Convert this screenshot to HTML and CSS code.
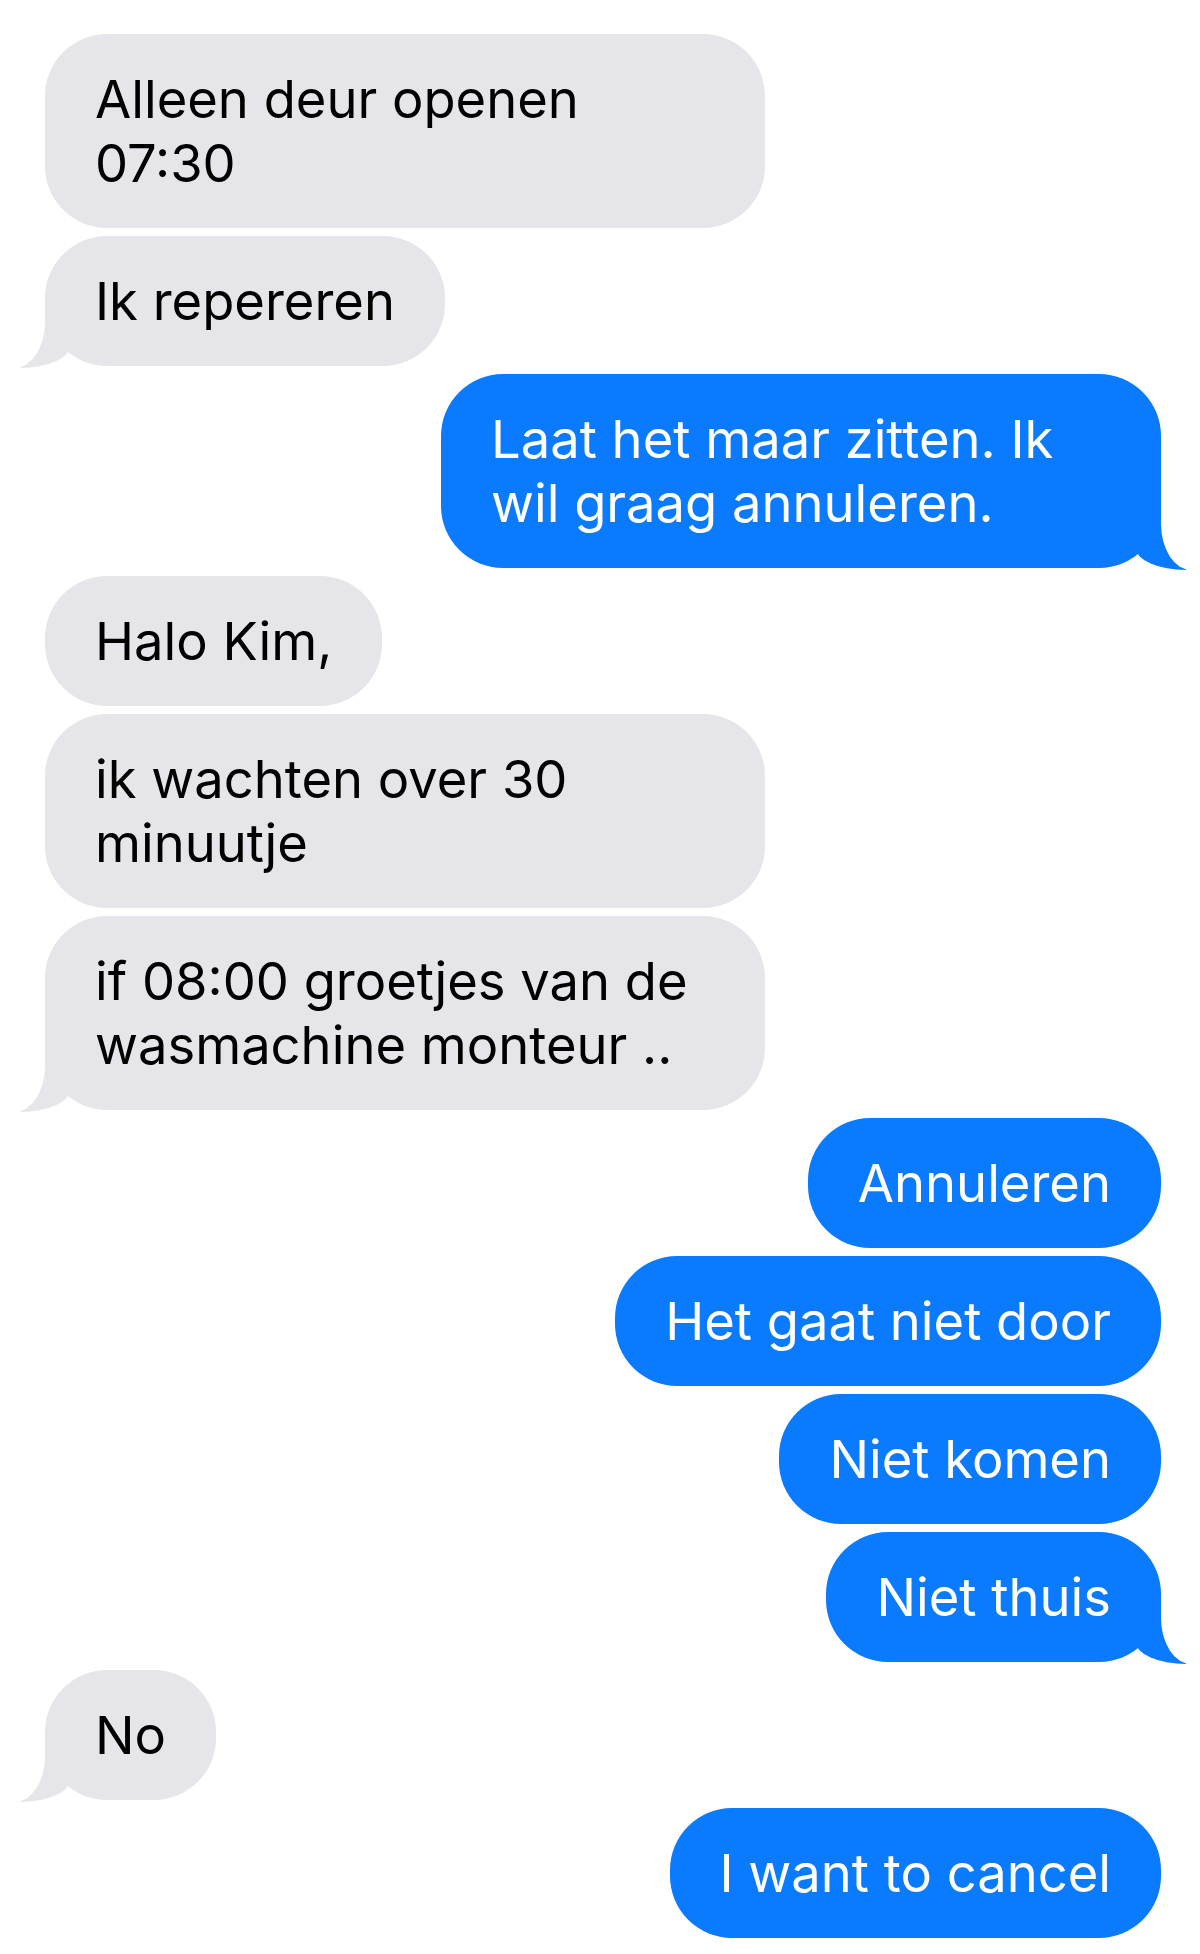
FILE: index.html
```html
<!DOCTYPE html>
<html lang="nl">
<head>
  <meta charset="UTF-8" />
  <meta name="viewport" content="width=device-width, initial-scale=1.0"/>
  <title>Berichten</title>
  <link rel="stylesheet" href="styles.css">
</head>
<body>
  <div class="chat">
    <div class="bubble them long">Alleen deur openen<br>07:30</div>
    <div class="bubble them tail">Ik repereren</div>

    <div class="bubble me long tail">Laat het maar zitten. Ik<br>wil graag annuleren.</div>

    <div class="bubble them">Halo Kim,</div>
    <div class="bubble them long">ik wachten over 30<br>minuutje</div>
    <div class="bubble them long tail">if 08:00 groetjes van de<br>wasmachine monteur ..</div>

    <div class="bubble me">Annuleren</div>
    <div class="bubble me">Het gaat niet door</div>
    <div class="bubble me">Niet komen</div>
    <div class="bubble me tail">Niet thuis</div>

    <div class="bubble them tail">No</div>

    <div class="bubble me">I want to cancel</div>
  </div>
</body>
</html>
```

FILE: styles.css
```css
* {
  box-sizing: border-box;
}
body {
  margin: 0;
  background: #fff;
  font-family: 'Inter', 'Liberation Sans', sans-serif;
}

.chat {
  display: flex;
  flex-direction: column;
  gap: 8px;
  padding: 34px 39px 20px 45px;
}

.bubble {
  position: relative;
  font-size: 52.5px;
  line-height: 64px;
  padding: 33px 50px;
  border-radius: 62px;
  white-space: nowrap;
}

.bubble.long {
  width: 720px;
}

.them {
  align-self: flex-start;
  background: #e5e5ea;
  color: #000;
}

.me {
  align-self: flex-end;
  background: #0a7aff;
  color: #fff;
}

/* tails */
.tail::before,
.tail::after {
  content: "";
  position: absolute;
  bottom: -2px;
  height: 66px;
}

.them.tail::before {
  left: -25px;
  width: 50px;
  background: #e5e5ea;
  border-bottom-right-radius: 50px 22px;
}
.them.tail::after {
  left: -60px;
  width: 60px;
  background: #fff;
  border-bottom-right-radius: 30px 46px;
}

.me.tail::before {
  right: -25px;
  width: 50px;
  background: #0a7aff;
  border-bottom-left-radius: 50px 22px;
}
.me.tail::after {
  right: -60px;
  width: 60px;
  background: #fff;
  border-bottom-left-radius: 30px 46px;
}
```
